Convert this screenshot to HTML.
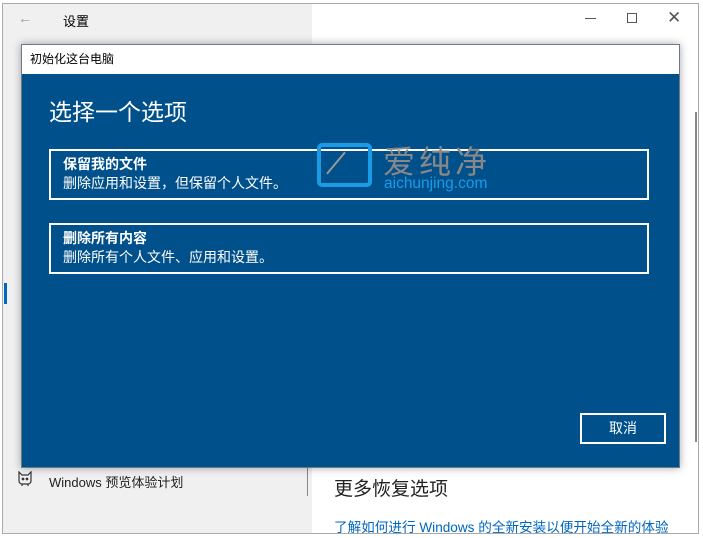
<!DOCTYPE html>
<html><head><meta charset="utf-8"><style>
*{margin:0;padding:0;box-sizing:border-box}
body{width:703px;height:538px;overflow:hidden;background:#fff;font-family:"Liberation Sans","Noto Sans CJK SC",sans-serif;position:relative}
.a{position:absolute}
.win{left:2px;top:3px;width:697px;height:531px;border:1px solid #aaa;background:#fff}
.left{left:3px;top:4px;width:309px;height:529px;background:#f0f0f0}
.dlg{left:21px;top:44px;width:659px;height:424px;box-shadow:0 0 8px rgba(0,0,0,.35);border:1px solid #6a7a8a}
.title{left:0;top:0;width:657px;height:29px;background:#fff;font-size:12px;color:#000;padding:5px 0 0 8px}
.blue{left:0;top:29px;width:657px;height:393px;background:#00508b}
.opt{border:2px solid #fff;color:#fff;left:27px;width:600px;height:51px;padding:4px 0 0 12px}
.opt b{font-size:14px;display:block;line-height:19px}
.opt span{font-size:14px;line-height:19px}
</style></head><body>
<div class="a win"></div>
<div class="a left"></div>
<div class="a" style="left:18px;top:10px;color:#999;font-size:14px">←</div>
<div class="a" style="left:63px;top:11px;font-size:13px;color:#000">设置</div>
<div class="a" style="left:585px;top:18px;width:11px;height:1px;background:#555"></div>
<div class="a" style="left:627px;top:13px;width:10px;height:10px;border:1px solid #555"></div>
<div class="a" style="left:667px;top:8px;font-size:17px;color:#555">✕</div>
<div class="a" style="left:695px;top:112px;width:2px;height:330px;background:#888"></div>
<div class="a" style="left:4px;top:283px;width:3px;height:21px;background:#0067c0"></div>
<div class="a" style="left:307px;top:468px;width:1px;height:28px;background:#888"></div>
<svg class="a" style="left:17px;top:471px" width="16" height="16" viewBox="0 0 16 16" fill="none" stroke="#333" stroke-width="1.2"><path d="M2 1l3 3h6l3-3v9a3 3 0 0 1-3 3H5a3 3 0 0 1-3-3z"/><circle cx="6" cy="8" r="0.8"/><circle cx="10" cy="8" r="0.8"/><path d="M5 15v-2M11 15v-2"/></svg>
<div class="a" style="left:49px;top:472px;font-size:13px;color:#222">Windows 预览体验计划</div>
<div class="a" style="left:334px;top:474px;font-size:19px;color:#222">更多恢复选项</div>
<div class="a" style="left:334px;top:516px;font-size:13.6px;color:#0067c0;white-space:nowrap">了解如何进行 Windows 的全新安装以便开始全新的体验</div>
<div class="a dlg">
 <div class="a title">初始化这台电脑</div>
 <div class="a blue">
  <div class="a" style="left:27px;top:19px;font-size:23px;color:#fff">选择一个选项</div>
  <div class="a opt" style="top:75px"><b>保留我的文件</b><span>删除应用和设置，但保留个人文件。</span></div>
  <div class="a opt" style="top:149px"><b>删除所有内容</b><span>删除所有个人文件、应用和设置。</span></div>
  <div class="a" style="left:295px;top:69px;width:55px;height:44px;border:4px solid #1a9be6;border-radius:5px"></div>
  <div class="a" style="left:300px;top:88px;width:28px;height:2px;background:#999;transform:rotate(-50deg)"></div>
  <div class="a" style="left:361px;top:63px;font-size:32px;color:#888;letter-spacing:4px">爱纯净</div>
  <div class="a" style="left:362px;top:101px;font-size:15.5px;color:#1a9be6">aichunjing.com</div>
  <div class="a" style="left:558px;top:339px;width:86px;height:31px;border:2px solid #fff;color:#fff;font-size:14px;text-align:center;line-height:27px">取消</div>
 </div>
</div>
</body></html>
